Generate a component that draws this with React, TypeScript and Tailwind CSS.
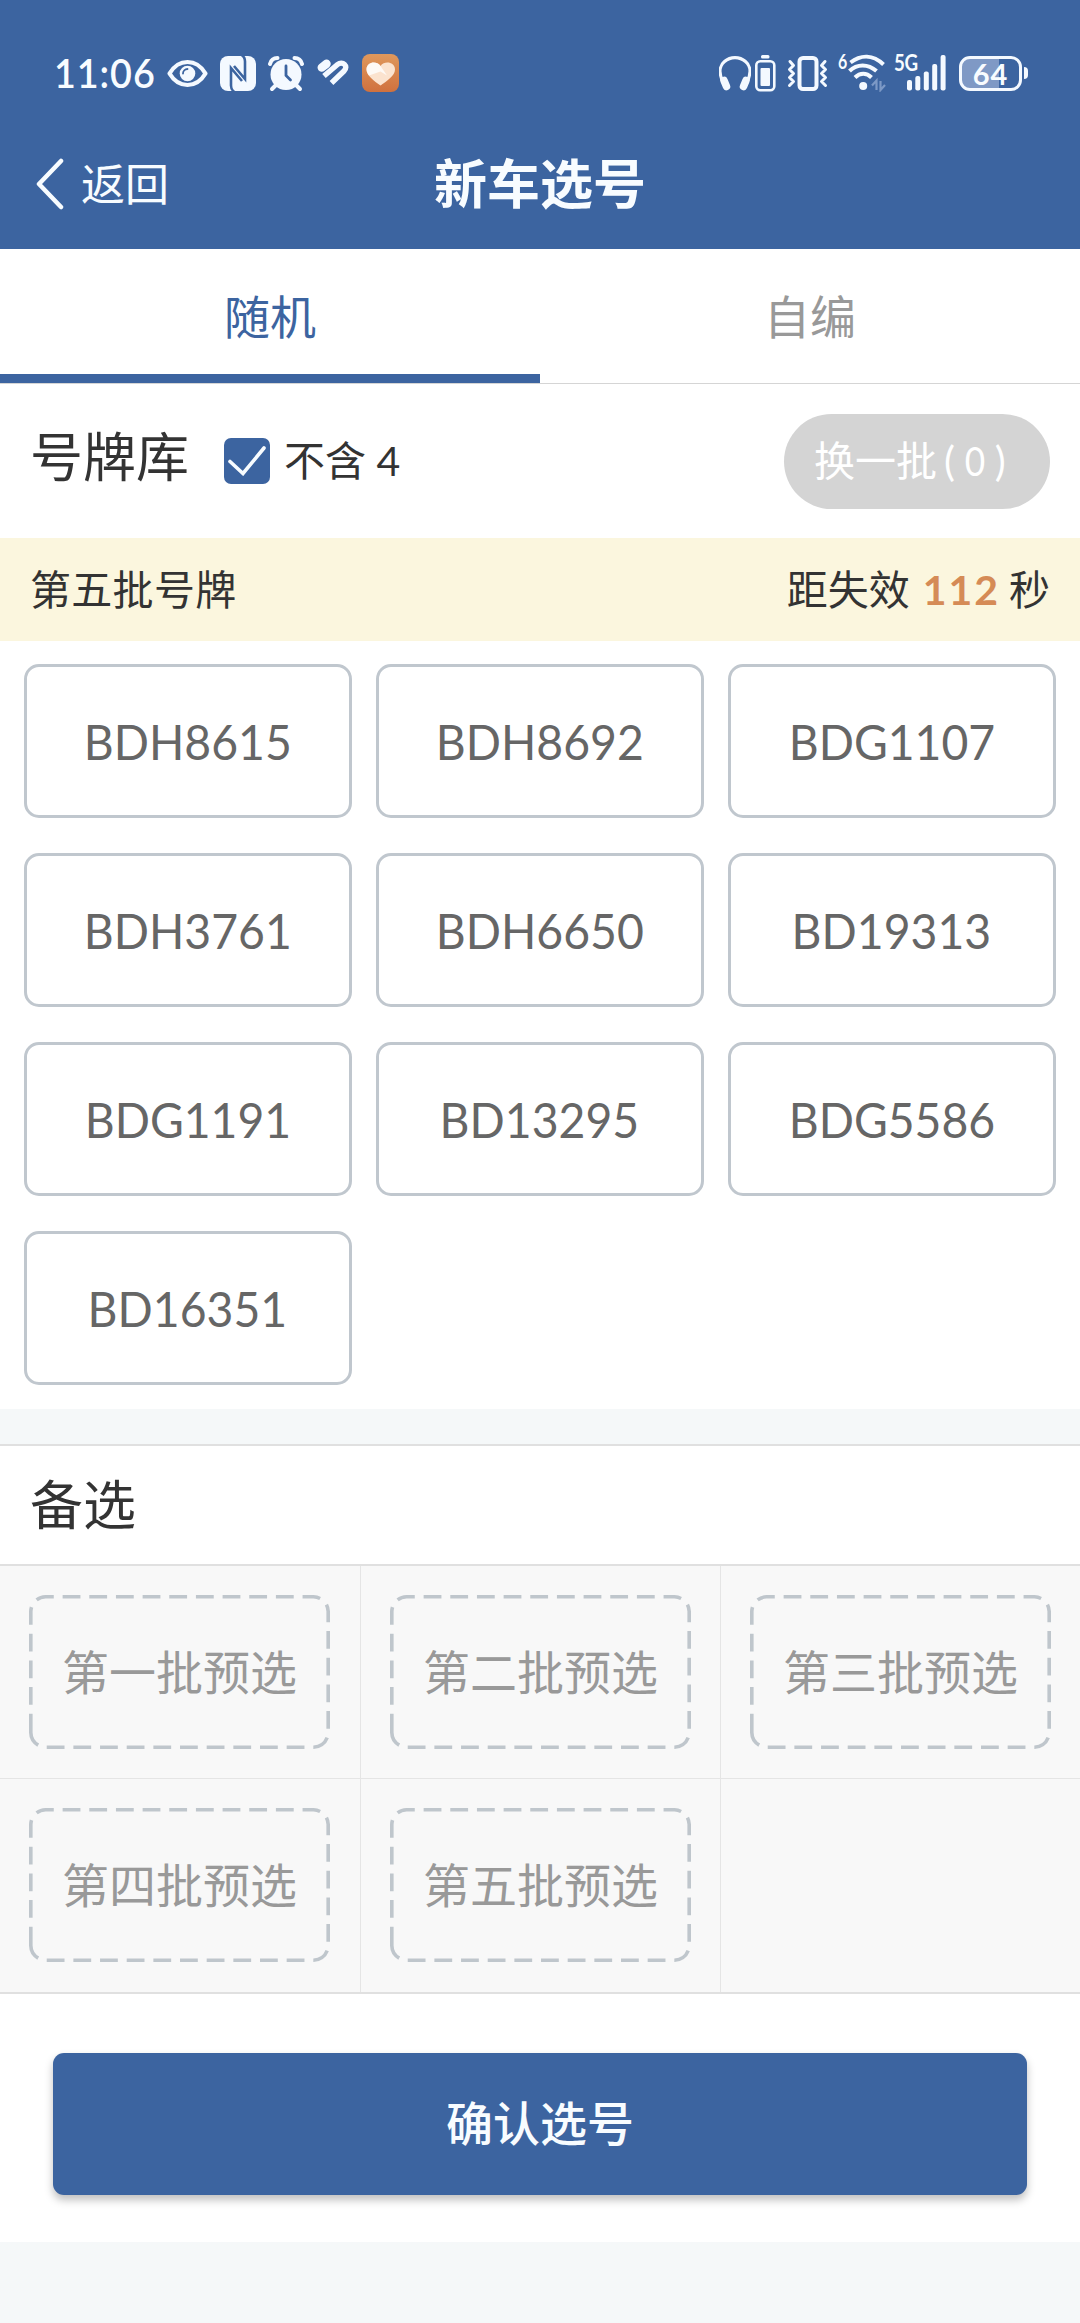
import { useState } from 'react'

const plates = [
  'BDH8615',
  'BDH8692',
  'BDG1107',
  'BDH3761',
  'BDH6650',
  'BD19313',
  'BDG1191',
  'BD13295',
  'BDG5586',
  'BD16351',
]

const batches = ['第一批预选', '第二批预选', '第三批预选', '第四批预选', '第五批预选']

function StatusBar() {
  return (
    <div className="flex h-[38px] items-center justify-between pr-[52px] pl-[54px]">
      <div className="flex items-center">
        <span className="w-[113px] origin-left scale-x-[0.92] text-[41px] leading-[38px] font-semibold tracking-[1px]">11:06</span>
        {/* 护眼 */}
        <svg className="mr-[12px] h-[38px] w-[41px]" viewBox="0 0 41 38" fill="none">
          <path d="M2.500 19.500C7 12 13 8 20.500 8S34 12 38.500 19.500C34 27 28 31 20.500 31S7 27 2.500 19.500Z" stroke="#f4f9ff" strokeWidth="4.200" strokeLinejoin="round" />
          <circle cx="20.500" cy="19.500" r="7.800" fill="#f4f9ff" />
          <path d="M16 19.500a4.500 4.500 0 0 1 4.500-4.500" stroke="#3c64a0" strokeWidth="1.800" strokeLinecap="round" />
        </svg>
        {/* NFC */}
        <svg className="mr-[12px] h-[38px] w-[36px]" viewBox="0 0 36 38" fill="none">
          <rect y="2" width="36" height="35" rx="8" fill="#f4f9ff" />
          <path d="M14.500 38C12 36.500 11 34.500 11 31.500V14L22 27M21.500 1C24 2.500 25 4.500 25 7.500V25L14 12" stroke="#3c64a0" strokeWidth="2.600" />
        </svg>
        {/* 闹钟 */}
        <svg className="mr-[13px] h-[38px] w-[36px]" viewBox="0 0 36 38" fill="none">
          <path d="M2 10C3 6 6 4 9.500 4M34 10C33 6 30 4 26.500 4" stroke="#f4f9ff" strokeWidth="4" strokeLinecap="round" />
          <circle cx="18" cy="20.500" r="15.500" fill="#f4f9ff" />
          <path d="M8 31l-4 4M28 31l4 4" stroke="#f4f9ff" strokeWidth="4" strokeLinecap="round" />
          <path d="M18 12v9.500l4.500 4.500" stroke="#3c64a0" strokeWidth="2.800" strokeLinecap="round" />
        </svg>
        {/* 运动健康 */}
        <svg className="mr-[12px] h-[38px] w-[33px]" viewBox="0 0 33 38" fill="none" stroke="#f4f9ff">
          <path d="M4.800 13.500L9.500 9.800" strokeWidth="8.500" strokeLinecap="round" />
          <path d="M7 22L20.500 10.500c5-4 11.500 1.500 6.500 6.500L14.500 29" strokeWidth="5.400" />
        </svg>
        {/* 公益 */}
        <svg className="h-[38px] w-[38px]" viewBox="0 0 38 38">
          <defs>
            <linearGradient id="orange" x1="0" y1="0" x2="0" y2="1">
              <stop offset="0" stopColor="#df985c" />
              <stop offset="1" stopColor="#d0713e" />
            </linearGradient>
          </defs>
          <rect width="37" height="38" rx="8" fill="url(#orange)" />
          <path d="M18.500 31.500C12 27 4.500 21.500 4.500 15.500 4.500 8.500 14 6 18.500 12 23 6 33 8.500 33 15.500 33 21.500 25 27 18.500 31.500Z" fill="#fbe3cf" />
          <path d="M18.500 12C14 6 4.500 8.500 4.500 15.500c0 2 1 4 2.500 6l11.500-4 6.500 4z" fill="#fff" opacity=".8" />
        </svg>
      </div>

      <div className="flex items-center">
        {/* 耳机 */}
        <svg className="mr-[4px] h-[38px] w-[32px]" viewBox="0 0 32 38" fill="none" stroke="#f4f9ff" strokeLinecap="round">
          <path d="M4 28C0 20 0 12 5.500 7.500 11.500 2.200 20.500 2.200 26.500 7.500 32 12 32 20 28 28" strokeWidth="3.200" />
          <path d="M5 26.500l2.500 6M27 26.500l-2.500 6" strokeWidth="7.500" />
        </svg>
        <svg className="mr-[11px] h-[38px] w-[21px]" viewBox="0 0 21 38">
          <rect x="6" y="1" width="8.500" height="3.500" rx="1.500" fill="#f4f9ff" />
          <rect x="1.300" y="7.300" width="18" height="29" rx="4" fill="none" stroke="#f4f9ff" strokeWidth="2.600" />
          <rect x="5.500" y="14" width="9.500" height="18" rx="1" fill="#f4f9ff" />
        </svg>
        {/* 振动 */}
        <svg className="mr-[9px] h-[38px] w-[42px]" viewBox="0 0 42 38" fill="none" stroke="#f4f9ff">
          <rect x="12.500" y="4" width="17" height="31" rx="3.500" strokeWidth="4" />
          <path d="M3 7.500l3.500 4-4 4 4 4-4 4 4 4-4 4M38 7.500l-3.500 4 4 4-4 4 4 4-4 4 4 4" strokeWidth="3" strokeLinecap="round" strokeLinejoin="round" />
        </svg>
        <span className="relative -top-[12px] w-[10px] text-[20px] leading-[20px] font-bold">
          <span className="inline-block origin-left scale-x-[0.8]">6</span>
        </span>
        <svg className="mr-[8px] h-[38px] w-[38px]" viewBox="0 0 38 38" fill="none" stroke="#f4f9ff" strokeWidth="4">
          <path d="M2.500 8.500C13 .5 25 .5 35.500 10.500" />
          <path d="M1.500 17C9 9.500 20 9.500 28.500 17" />
          <path d="M7 23.500c5-5 11.500-5 16.500 0" />
          <circle cx="15.200" cy="32" r="4" fill="#f4f9ff" stroke="none" />
          <path d="M24 31.500l4.500-5V36M32.500 27v9l4.500-5" stroke="#7d99c6" strokeWidth="2.200" />
        </svg>
        <span className="relative -top-[10px] z-10 w-[13px] text-[22px] leading-[22px] font-bold tracking-[-0.5px]">
          <span className="inline-block origin-left scale-x-[0.85]">5G</span>
        </span>
        <svg className="mr-[13px] h-[38px] w-[39px]" viewBox="0 0 39 38" fill="#f4f9ff">
          <rect x="0" y="26" width="5" height="10.500" rx="2" />
          <rect x="8.300" y="22" width="5" height="14.500" rx="2" />
          <rect x="16.800" y="17.500" width="5" height="19" rx="2" />
          <rect x="25.200" y="10" width="5" height="26.500" rx="2" />
          <rect x="33.600" y="1" width="5" height="35.500" rx="2" />
        </svg>
        <div className="flex h-[35px] w-[63px] items-center justify-center rounded-[11px] border-[3px] border-[#f4f9ff] bg-linear-to-r from-[#7f99c5] from-65% to-[#3c64a0] to-65%">
          <span className="text-[29px] leading-[29px] font-bold tracking-[1px]">64</span>
        </div>
        <div className="ml-[2px] h-[12px] w-[4px] rounded-r-[4px] bg-[#f4f9ff]" />
      </div>
    </div>
  )
}

function Slot({ label }: { label: string }) {
  return (
    <div className="relative ml-[29px] mt-[29px] flex h-[154px] w-[301px] items-center justify-center">
      <svg className="absolute inset-0 h-full w-full" viewBox="0 0 301 154" fill="none">
        <path
          d="M1.800 136.500V16.500A15 15 0 0 1 16.500 1.800H284.500A15 15 0 0 1 299.200 16.500V137.500A15 15 0 0 1 284.500 152.200H16.500A15 15 0 0 1 1.800 137.500Z"
          stroke="#bfc6cc"
          strokeWidth="3.600"
          strokeDasharray="17.800 8.860"
        />
      </svg>
      <span className="text-[47px] leading-[60px] text-[#999]">{label}</span>
    </div>
  )
}

export default function App() {
  const [tab, setTab] = useState(0)
  const [noFour, setNoFour] = useState(true)

  return (
    <div className="h-[2323px] w-[1080px] overflow-hidden bg-[#f5f8f9] font-['Lato','Noto_Sans_CJK_SC',sans-serif] text-[#333]">
      <header className="h-[249px] bg-[#3c64a0] pt-[54px] text-[#f8fcff]">
        <StatusBar />
        <div className="mt-[42px] grid h-[100px] grid-cols-3 items-center">
          <button className="flex items-center pl-[35px]">
            <svg className="mr-[17px] h-[52px] w-[29px]" viewBox="0 0 29 52" fill="none">
              <path d="M26 3L4 26l22 23" stroke="#f8fcff" strokeWidth="4.500" strokeLinecap="round" strokeLinejoin="round" />
            </svg>
            <span className="text-[44px] leading-[60px]">返回</span>
          </button>
          <h1 className="text-center text-[53px] leading-[70px] font-bold">新车选号</h1>
        </div>
      </header>

      {/* 选号方式 */}
      <div className="flex h-[135px] border-b border-[#d5d5d5] bg-white">
        {['随机', '自编'].map((name, i) => (
          <button
            key={name}
            onClick={() => setTab(i)}
            className={`h-[134px] w-1/2 border-b-[9px] pt-[10px] text-[46px] ${
              tab === i ? 'border-[#3c64a0] text-[#3c64a0]' : 'border-transparent text-[#999]'
            }`}
          >
            {name}
          </button>
        ))}
      </div>

      <section className="h-[1025px] bg-white">
        <div className="flex h-[154px] items-center justify-between px-[30px]">
          <div className="flex items-center">
            <h2 className="mr-[35px] -mt-[8px] text-[53px] leading-[70px]">号牌库</h2>
            <button onClick={() => setNoFour(!noFour)} className="flex items-center">
              <span className="mr-[14px] flex h-[46px] w-[46px] items-center justify-center rounded-[7px] bg-[#3c64a0]">
                {noFour && (
                  <svg className="h-[30px] w-[38px]" viewBox="0 0 38 30" fill="none">
                    <path d="M2 15.500l13 12L36 2" stroke="#f8fcff" strokeWidth="3.600" strokeLinecap="round" />
                  </svg>
                )}
              </span>
              <span className="text-[41px] leading-[56px]">不含 4</span>
            </button>
          </div>
          <button className="flex h-[95px] w-[266px] items-center rounded-full bg-[#d4d4d4] pl-[30px] text-[41px] text-white">
            换一批
            <span className="ml-[7px]">(</span>
            <span className="mx-[8px] scale-x-[0.86]">0</span>
            <span>)</span>
          </button>
        </div>

        <div className="flex h-[103px] items-center justify-between bg-[#fbf6de] px-[30px] text-[41px]">
          <span className="tracking-[0.3px]">第五批号牌</span>
          <span className="flex">
            距失效
            <span className="mr-[9px] ml-[13px] font-bold tracking-[2px] text-[#d58b56]">112</span>
            秒
          </span>
        </div>

        <div className="grid grid-cols-3 gap-x-[24px] gap-y-[35px] px-[24px] pt-[23px]">
          {plates.map((plate) => (
            <button
              key={plate}
              className="h-[154px] rounded-[15px] border-[3px] border-[#c0c7ce] pt-px pr-px text-[48px] text-[#666]"
            >
              <span className="inline-block scale-x-[0.965]">{plate}</span>
            </button>
          ))}
        </div>
      </section>

      <section className="mt-[35px] border-t-2 border-[#e0e0e0] bg-white">
        <h2 className="h-[118px] pt-[23px] pl-[30px] text-[53px] leading-[72px]">备选</h2>
        <div className="grid grid-cols-3 border-t-2 border-b-2 border-[#e0e0e0] bg-[#f8f8f8]">
          {[...batches, ''].map((label, i) => (
            <div key={i} className={`h-[213px] border-[#e5e5e5] ${i % 3 !== 0 ? 'border-l' : ''} ${i < 3 ? 'border-b' : ''}`}>
              {label && <Slot label={label} />}
            </div>
          ))}
        </div>
        <div className="h-[248px] px-[53px] pt-[59px]">
          <button className="h-[142px] w-full rounded-[11px] bg-[#3c64a0] pb-px text-[47px] font-medium text-[#f8fcff] shadow-[0_5px_8px_rgba(0,0,0,0.25)]">
            确认选号
          </button>
        </div>
      </section>
    </div>
  )
}
